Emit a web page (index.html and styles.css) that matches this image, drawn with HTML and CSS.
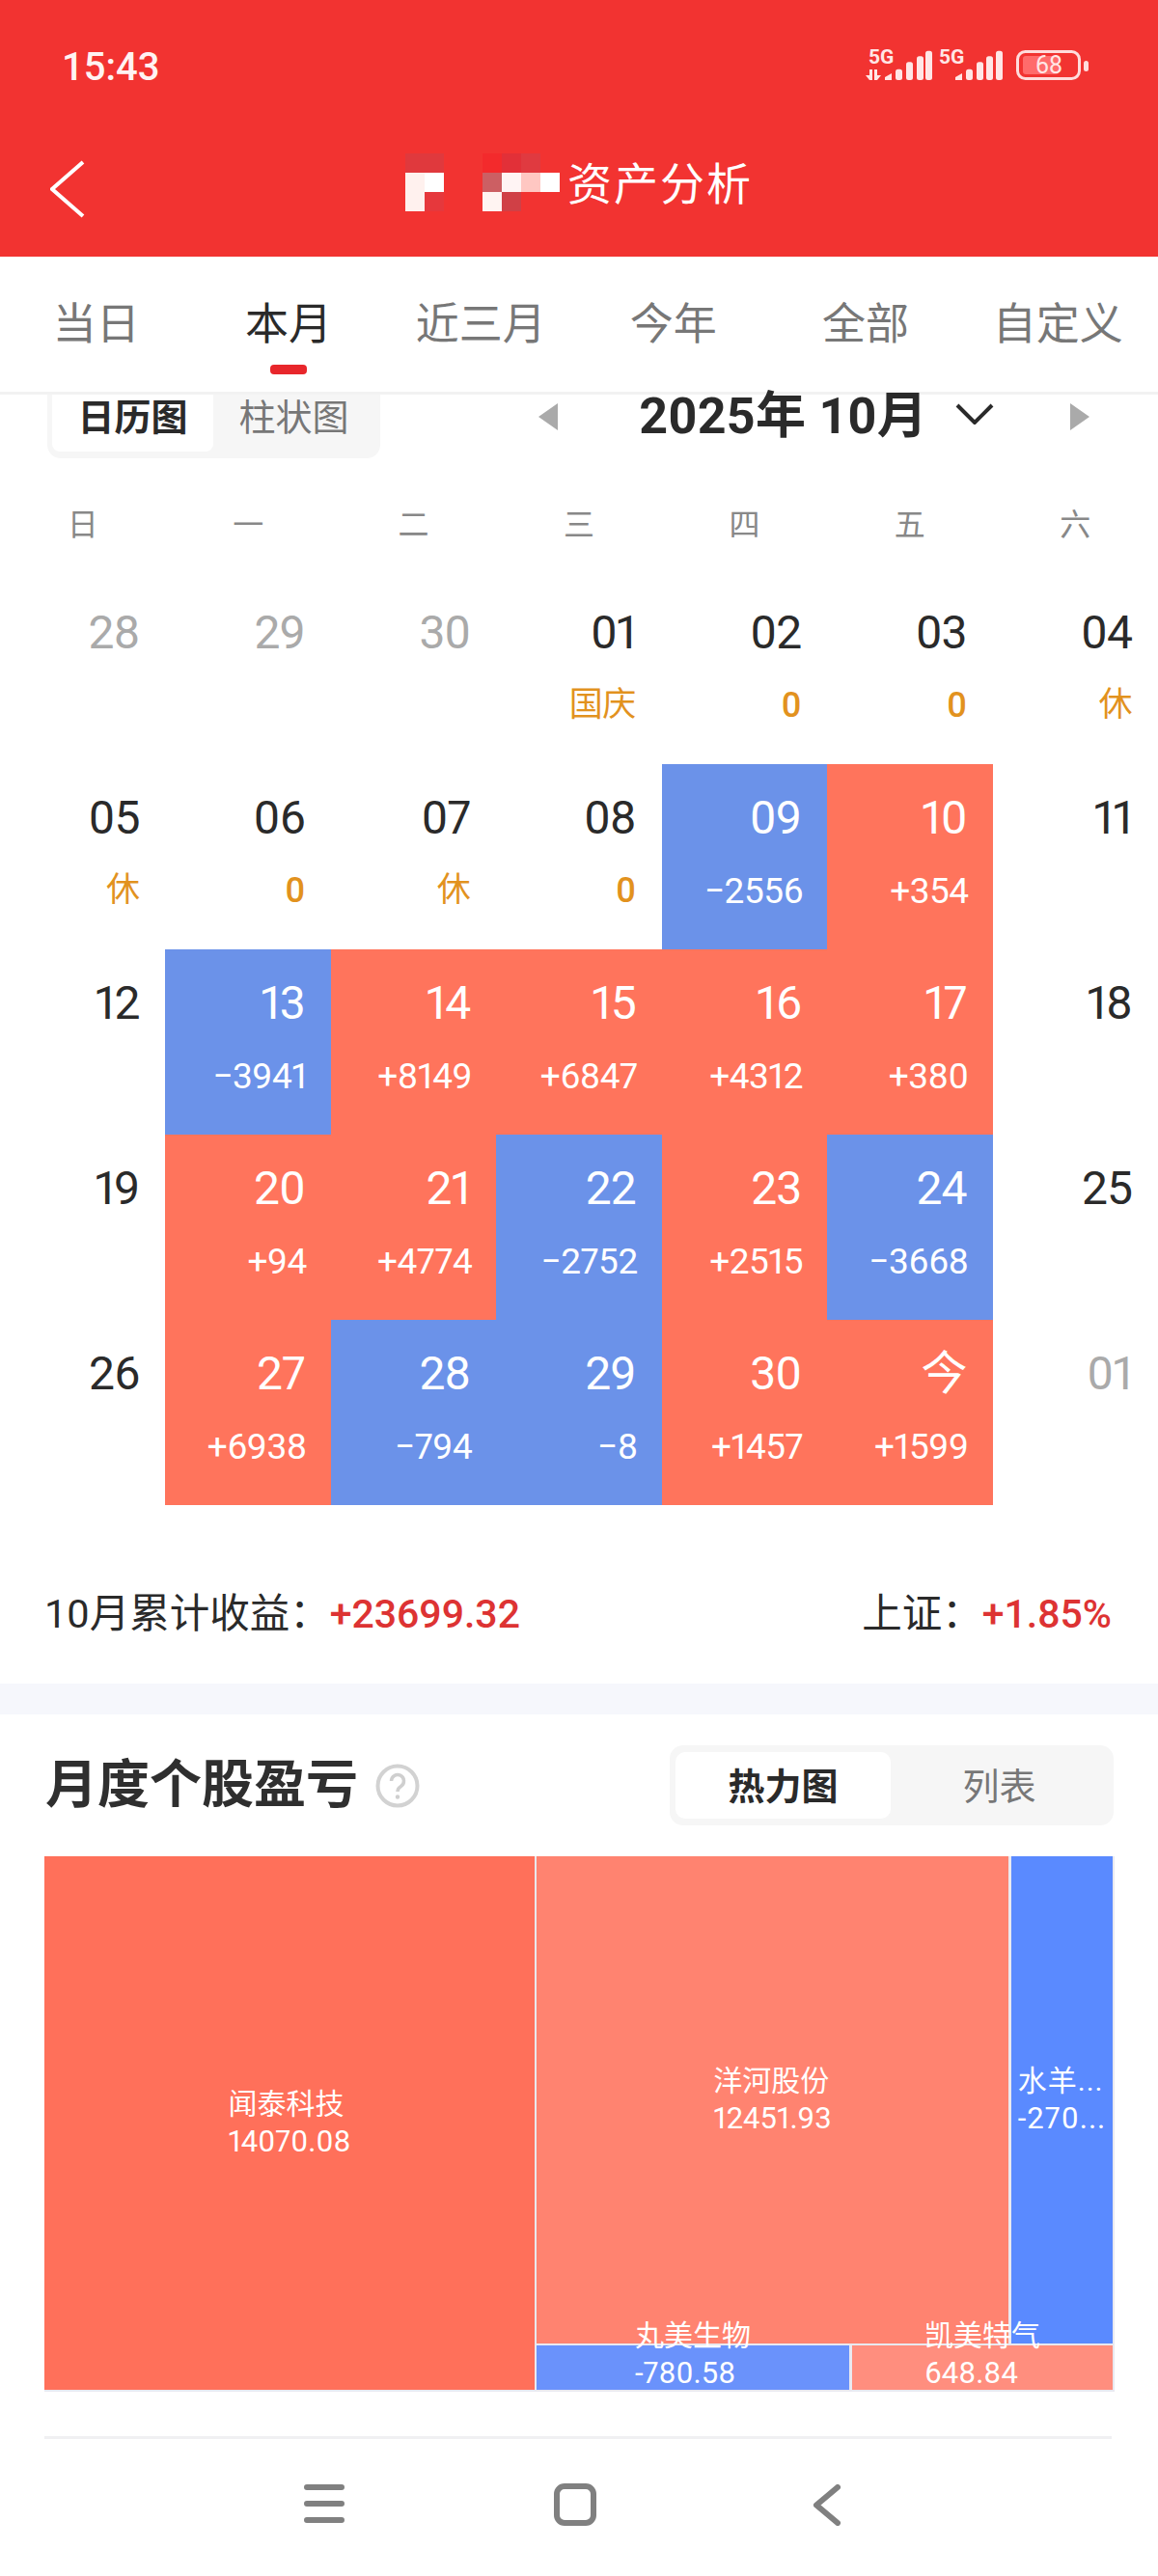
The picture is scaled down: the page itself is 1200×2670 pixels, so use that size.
FILE: index.html
```html
<!DOCTYPE html>
<html lang="zh-CN">
<head>
<meta charset="utf-8">
<title>资产分析</title>
<link rel="stylesheet" href="styles.css">
</head>
<body>
<div class="page">
  <header class="top">
    <div class="status">
      <span class="time">15:43</span>
      <svg class="status-icons" width="244" height="60" viewBox="0 -10 244 60">
        <g fill="#ffe6e6">
          <text x="8" y="16" class="net">5G</text>
          <path d="M9 22h3v11H9l-4-5h4zM14 22h3v6h4l-4 5h-3z"/>
          <path d="M25 33v-3l7-4v7z"/>
          <rect x="36" y="21.7" width="7" height="11.3" rx="2.5"/>
          <rect x="47" y="14.3" width="7" height="18.7" rx="2.5"/>
          <rect x="58" y="8.3" width="7" height="24.7" rx="2.5"/>
          <rect x="67" y="2.7" width="7" height="30.3" rx="2.5"/>
          <text x="81" y="16" class="net">5G</text>
          <path d="M98 33v-3l7-4v7z"/>
          <rect x="109" y="21.7" width="7" height="11.3" rx="2.5"/>
          <rect x="120" y="14.3" width="7" height="18.7" rx="2.5"/>
          <rect x="130" y="8.3" width="7" height="24.7" rx="2.5"/>
          <rect x="140" y="2.7" width="7" height="30.3" rx="2.5"/>
        </g>
        <rect x="162.5" y="3.5" width="64" height="28" rx="8" fill="none" stroke="#ffdcdc" stroke-width="3"/>
        <rect x="168" y="8" width="37" height="19" rx="3" fill="#ff6b6b"/>
        <text x="195" y="26" class="batt">68</text>
        <rect x="231" y="13" width="5" height="11" rx="2.5" fill="#ffdcdc"/>
      </svg>
    </div>
    <div class="titlebar">
      <svg class="back" width="36" height="60" viewBox="0 0 36 60"><path d="M34 2 2 30l32 28"/></svg>
      <svg class="mosaic" width="160" height="60" viewBox="0 0 160 60">
        <rect x="0" y="0" width="40" height="20" fill="#e0393d"/>
        <rect x="0" y="20" width="20" height="40" fill="#fff1ee"/>
        <rect x="20" y="20" width="20" height="20" fill="#fff"/>
        <rect x="20" y="40" width="20" height="20" fill="#e6383c"/>
        <rect x="80" y="0" width="20" height="20" fill="#f32a2c"/>
        <rect x="100" y="0" width="20" height="20" fill="#e23038"/>
        <rect x="120" y="0" width="20" height="20" fill="#e03a40"/>
        <rect x="80" y="20" width="20" height="20" fill="#cc5f63"/>
        <rect x="100" y="20" width="20" height="20" fill="#fff4f4"/>
        <rect x="120" y="20" width="20" height="20" fill="#ffc7c2"/>
        <rect x="140" y="20" width="20" height="20" fill="#fff"/>
        <rect x="80" y="40" width="20" height="20" fill="#fff4f2"/>
        <rect x="100" y="40" width="20" height="20" fill="#d04046"/>
      </svg>
      <h1 class="title">资产分析</h1>
    </div>
  </header>

  <nav class="tabs">
    <a class="tab">当日</a>
    <a class="tab on">本月</a>
    <a class="tab">近三月</a>
    <a class="tab">今年</a>
    <a class="tab">全部</a>
    <a class="tab">自定义</a>
  </nav>

  <section class="calendar">
    <div class="cal-bar">
      <div class="switch-clip">
        <div class="switch cal-switch">
          <span class="sw on">日历图</span>
          <span class="sw">柱状图</span>
        </div>
      </div>
      <div class="month-nav">
        <i class="tri tri-l"></i>
        <span class="month">2025年 10月</span>
        <svg class="chev" width="40" height="22" viewBox="0 0 40 22"><path d="M2 2l18 18L38 2"/></svg>
        <i class="tri tri-r"></i>
      </div>
    </div>
    <div class="week">
      <span>日</span><span>一</span><span>二</span><span>三</span><span>四</span><span>五</span><span>六</span>
    </div>
    <div class="grid">
      <div class="cell"><b class="d mute">28</b></div>
      <div class="cell"><b class="d mute">29</b></div>
      <div class="cell"><b class="d mute">30</b></div>
      <div class="cell"><b class="d">01</b><em class="s hol">国庆</em></div>
      <div class="cell"><b class="d">02</b><em class="s hol zero">0</em></div>
      <div class="cell"><b class="d">03</b><em class="s hol zero">0</em></div>
      <div class="cell"><b class="d">04</b><em class="s hol">休</em></div>

      <div class="cell"><b class="d">05</b><em class="s hol">休</em></div>
      <div class="cell"><b class="d">06</b><em class="s hol zero">0</em></div>
      <div class="cell"><b class="d">07</b><em class="s hol">休</em></div>
      <div class="cell"><b class="d">08</b><em class="s hol zero">0</em></div>
      <div class="cell loss"><b class="d">09</b><em class="s">−2556</em></div>
      <div class="cell gain"><b class="d">10</b><em class="s">+354</em></div>
      <div class="cell"><b class="d">11</b></div>

      <div class="cell"><b class="d">12</b></div>
      <div class="cell loss"><b class="d">13</b><em class="s">−3941</em></div>
      <div class="cell gain"><b class="d">14</b><em class="s">+8149</em></div>
      <div class="cell gain"><b class="d">15</b><em class="s">+6847</em></div>
      <div class="cell gain"><b class="d">16</b><em class="s">+4312</em></div>
      <div class="cell gain"><b class="d">17</b><em class="s">+380</em></div>
      <div class="cell"><b class="d">18</b></div>

      <div class="cell"><b class="d">19</b></div>
      <div class="cell gain"><b class="d">20</b><em class="s">+94</em></div>
      <div class="cell gain"><b class="d">21</b><em class="s">+4774</em></div>
      <div class="cell loss"><b class="d">22</b><em class="s">−2752</em></div>
      <div class="cell gain"><b class="d">23</b><em class="s">+2515</em></div>
      <div class="cell loss"><b class="d">24</b><em class="s">−3668</em></div>
      <div class="cell"><b class="d">25</b></div>

      <div class="cell"><b class="d">26</b></div>
      <div class="cell gain"><b class="d">27</b><em class="s">+6938</em></div>
      <div class="cell loss"><b class="d">28</b><em class="s">−794</em></div>
      <div class="cell loss"><b class="d">29</b><em class="s">−8</em></div>
      <div class="cell gain"><b class="d">30</b><em class="s">+1457</em></div>
      <div class="cell gain"><b class="d">今</b><em class="s">+1599</em></div>
      <div class="cell"><b class="d mute">01</b></div>
    </div>
    <div class="summary">
      <p class="sum-item">10月累计收益：<strong class="up">+23699.32</strong></p>
      <p class="sum-item">上证：<strong class="up">+1.85%</strong></p>
    </div>
  </section>

  <div class="band"></div>

  <section class="stocks">
    <div class="stocks-head">
      <h2 class="h2">月度个股盈亏</h2>
      <svg class="help" width="46" height="46" viewBox="0 0 46 46">
        <circle cx="23" cy="23" r="20.5"/>
        <path class="help-q" d="M16.5 18a6.5 6.5 0 1 1 10 5.5c-2.5 1.6-3.5 2.8-3.5 5.5"/>
        <circle class="help-dot" cx="23" cy="34.5" r="2.2"/>
      </svg>
      <div class="switch heat-switch">
        <span class="sw on">热力图</span>
        <span class="sw">列表</span>
      </div>
    </div>
    <div class="treemap">
      <div class="node n-wt"><div class="lbl"><div>闻泰科技</div><div class="val">14070.08</div></div></div>
      <div class="tm-right">
        <div class="tm-top">
          <div class="node n-yh"><div class="lbl"><div>洋河股份</div><div class="val">12451.93</div></div></div>
          <div class="node n-sy"><div class="lbl"><div>水羊...</div><div class="val">-270...</div></div></div>
        </div>
        <div class="tm-bot">
          <div class="node n-wm low"><div class="lbl"><div>丸美生物</div><div class="val">-780.58</div></div></div>
          <div class="node n-km low"><div class="lbl"><div>凯美特气</div><div class="val">648.84</div></div></div>
        </div>
      </div>
    </div>
    <div class="rule"></div>
  </section>

  <footer class="navbar">
    <svg class="nav-i i-menu" width="42" height="40" viewBox="0 0 42 40"><path d="M3 3h36M3 20h36M3 37h36"/></svg>
    <svg class="nav-i i-home" width="44" height="46" viewBox="0 0 44 46"><rect x="3" y="4" width="38" height="38" rx="8"/></svg>
    <svg class="nav-i i-back" width="30" height="43" viewBox="0 0 30 43"><path d="M26 3 4 21.5 26 40"/></svg>
  </footer>
</div>
</body>
</html>
```
FILE: styles.css
```css
* { box-sizing: border-box; }
html, body { margin: 0; padding: 0; background: #fff; }
body { font-family: Roboto, "Noto Sans CJK SC", sans-serif; color: #2a2a2a; }
.page { width: 1200px; height: 2670px; overflow: hidden; background: #fff; }

.top { height: 266px; background: #f23331; color: #fff; }
.status { height: 154px; display: flex; align-items: flex-start; justify-content: space-between; padding: 49px 64px 0 64px; }
.time { font-size: 40px; line-height: 42px; font-weight: 500; color: #fff3f3; }
.status-icons { margin-top: -9px; }
.net { font: 700 21px Roboto, sans-serif; }
.batt { font: 400 25px Roboto, sans-serif; fill: #ffe6e6; text-anchor: middle; }
.titlebar { display: flex; align-items: flex-start; height: 70px; padding: 5px 0 0 52px; }
.back { margin-top: 7px; }
.back path { fill: none; stroke: #fff; stroke-width: 4; }
.mosaic { margin-left: 332px; }
.title { margin: 1px 0 0 8px; font-size: 46px; font-weight: 400; line-height: 62px; letter-spacing: 2px; }

.tabs { height: 143px; display: grid; grid-template-columns: repeat(6, 1fr); padding-right: 4px; border-bottom: 3px solid #f2f2f2; }
.tab { position: relative; text-align: center; font-size: 45px; line-height: 60px; padding-top: 41px; color: #777; }
.tab.on { color: #2a2a2a; }
.tab.on::after { content: ""; position: absolute; left: 81px; top: 112px; width: 38px; height: 10px; border-radius: 4px; background: #e8262b; }

.calendar { height: 1336px; }
.cal-bar { height: 95px; display: flex; align-items: flex-start; justify-content: space-between; padding-left: 49px; }
.switch-clip { height: 66px; overflow: hidden; }
.switch { display: flex; background: #f6f6f6; border-radius: 14px; padding: 7px; }
.cal-switch { margin-top: -20px; height: 86px; width: 345px; padding: 0 5px 7px; }
.sw { display: flex; align-items: center; justify-content: center; font-size: 38px; color: #777; }
.sw.on { background: #fff; border-radius: 8px; color: #2a2a2a; font-weight: 700; }
.cal-switch .sw { width: 167px; padding-top: 2px; }
.month-nav { display: flex; align-items: center; height: 62px; margin-top: -8px; padding-right: 71px; }
.tri { display: block; width: 0; height: 0; border-style: solid; border-color: transparent; }
.tri-l { border-width: 14px 20px 14px 0; border-right-color: #aaa; margin-right: 84px; }
.tri-r { border-width: 14px 0 14px 20px; border-left-color: #aaa; margin-left: 79px; }
.month { font-size: 52px; font-weight: 700; line-height: 62px; letter-spacing: 0.3px; color: #2a2a2a; white-space: nowrap; }
.chev { margin: 0 0 6px 29px; }
.chev path { fill: none; stroke: #2a2a2a; stroke-width: 4; }

.week { height: 96px; display: grid; grid-template-columns: repeat(7, 1fr); text-align: center; font-size: 32px; line-height: 81px; color: #888; }
.grid { display: grid; grid-template-columns: repeat(7, 1fr); grid-auto-rows: 192px; }
.cell { display: flex; flex-direction: column; align-items: flex-end; padding: 30px 27px 0 0; }
.d { font-size: 48px; font-weight: 400; line-height: 52px; letter-spacing: -1px; font-variant-numeric: proportional-nums; }
.s { margin: 27px -2px 0 0; font-style: normal; font-size: 37px; line-height: 46px; letter-spacing: -0.5px; font-variant-numeric: proportional-nums; }
.mute { color: #aaa; }
.hol { margin: 26px 0 0; font-size: 35px; color: #e2921e; }
.zero { font-size: 36px; font-weight: 500; }
.gain { background: #ff745c; color: #fff; }
.loss { background: #6b92e9; color: #fff; }

.summary { display: flex; justify-content: space-between; padding: 88px 48px 0 46px; }
.sum-item { margin: 0; font-size: 41.5px; line-height: 50px; color: #2a2a2a; }
.up { color: #dd3333; font-size: 41px; font-weight: 500; }

.band { height: 32px; background: #f6f7fc; }

.stocks { padding: 32px 46px 0; }
.stocks-head { display: flex; align-items: center; height: 83px; padding-left: 1px; }
.h2 { margin: 0; font-size: 54px; line-height: 60px; font-weight: 700; color: #2f2f2f; }
.help { margin-left: 18px; }
.help circle { fill: none; stroke: #d2d2d2; stroke-width: 4; }
.help .help-q { fill: none; stroke: #cfcfcf; stroke-width: 3.5; }
.help .help-dot { fill: #cfcfcf; stroke: none; }
.heat-switch { margin-left: auto; width: 460px; height: 83px; padding: 7px 6px; }
.heat-switch .sw { flex: none; padding-bottom: 4px; }
.heat-switch .sw.on { width: 223px; border-radius: 10px; }
.heat-switch .sw:last-child { width: 225px; }

.treemap { margin-top: 32px; width: 1109px; height: 555px; display: flex; gap: 2px; background: #e9e9f0; padding-bottom: 2px; }
.node { display: flex; align-items: center; justify-content: center; color: #fff; font-size: 30px; line-height: 39px; }
.lbl { white-space: nowrap; padding-bottom: 2px; }
.val { font-size: 31px; font-variant-numeric: proportional-nums; }
.n-wt { width: 508px; background: #ff705a; }
.tm-right { width: 599px; display: flex; flex-direction: column; gap: 2px; }
.tm-top { height: 505px; display: flex; gap: 3px; }
.n-yh { width: 489px; background: #ff8370; }
.n-sy { width: 105px; background: #5a8aff; letter-spacing: 1px; }
.tm-bot { height: 46px; display: flex; gap: 3px; }
.low { padding-bottom: 27px; }
.n-wm { width: 324px; background: #6a92fb; }
.n-km { width: 270px; background: #ff8e7e; }

.rule { margin-top: 46px; height: 3px; width: 1106px; background: #f0f0f2; }

.navbar { display: flex; align-items: flex-start; height: 90px; padding-top: 47px; }
.nav-i { fill: none; stroke: #808080; stroke-width: 6; stroke-linecap: round; stroke-linejoin: round; }
.i-menu { margin: 0 0 0 315px; }
.i-home { margin: -2px 0 0 217px; }
.i-back { margin: 0 0 0 224px; }
```
